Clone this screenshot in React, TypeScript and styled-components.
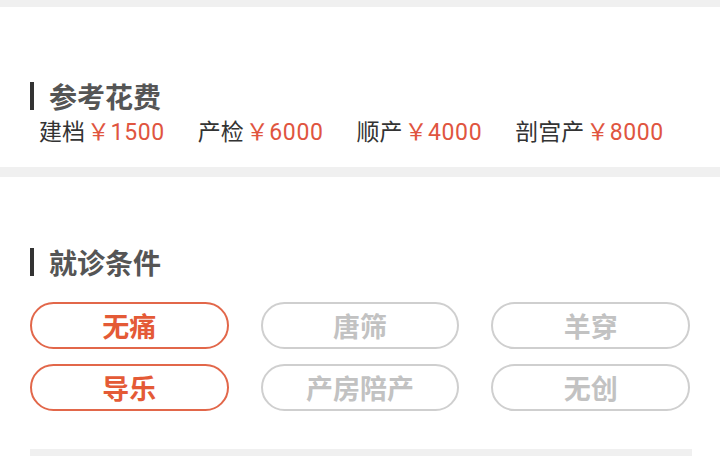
import React from "react";
import styled, { createGlobalStyle } from "styled-components";

const Global = createGlobalStyle`
  html, body { margin: 0; padding: 0; background: #ffffff; }
  body { font-family: Roboto, "Noto Sans CJK SC", sans-serif; }
`;

const Page = styled.div`
  width: 720px;
  height: 456px;
  overflow: hidden;
  background: #f0f0f0;
  padding-top: 7px;
  box-sizing: border-box;
  display: flex;
  flex-direction: column;
  gap: 10px;
`;

const Section = styled.section<{ $pt: number; $pb: number }>`
  background: #ffffff;
  padding: ${(p) => p.$pt}px 0 ${(p) => p.$pb}px;
  display: flex;
  flex-direction: column;
  flex-shrink: 0;
`;

const Title = styled.h2`
  margin: 0;
  padding-left: 30px;
  display: flex;
  align-items: center;
  gap: 15px;
  height: 32px;
  font-size: 28px;
  font-weight: 700;
  color: #555555;
  font-family: "Noto Sans CJK SC", sans-serif;
  &::before {
    content: "";
    width: 4px;
    height: 28px;
    background: #333333;
  }
`;

const CostRow = styled.div`
  display: flex;
  gap: 33px;
  padding-left: 39px;
  margin-top: 3px;
  height: 30px;
  align-items: center;
  font-size: 23px;
  font-family: Roboto, "Noto Sans CJK SC", sans-serif;
`;

const CostItem = styled.span`
  color: #333333;
  white-space: nowrap;
`;

const Price = styled.span`
  color: #e0553f;
  margin-left: 2px;
  letter-spacing: 0.6px;
`;

const Grid = styled.div`
  display: grid;
  grid-template-columns: repeat(3, 1fr);
  column-gap: 32px;
  row-gap: 15px;
  padding: 0 30px;
  margin-top: 24px;
`;

const Tag = styled.div<{ $active: boolean }>`
  height: 47px;
  box-sizing: border-box;
  border-radius: 24px;
  border: 2px solid ${(p) => (p.$active ? "#e2674a" : "#cfcfcf")};
  color: ${(p) => (p.$active ? "#e45a36" : "#c2c2c2")};
  display: flex;
  align-items: center;
  justify-content: center;
  font-size: 27px;
  font-weight: 700;
  font-family: "Noto Sans CJK SC", sans-serif;
`;

const BottomBar = styled.div`
  margin: 38px 28px 0 30px;
  height: 10px;
  background: #f0f0f0;
`;

const costs = [
  ["建档", "1500"],
  ["产检", "6000"],
  ["顺产", "4000"],
  ["剖宫产", "8000"],
];

const tags: [string, boolean][] = [
  ["无痛", true],
  ["唐筛", false],
  ["羊穿", false],
  ["导乐", true],
  ["产房陪产", false],
  ["无创", false],
];

export default function App() {
  return (
    <>
      <Global />
      <Page>
        <Section $pt={73} $pb={22}>
          <Title>参考花费</Title>
          <CostRow>
            {costs.map(([k, v]) => (
              <CostItem key={k}>
                {k}
                <Price>￥{v}</Price>
              </CostItem>
            ))}
          </CostRow>
        </Section>
        <Section $pt={69} $pb={0}>
          <Title>就诊条件</Title>
          <Grid>
            {tags.map(([t, a]) => (
              <Tag key={t} $active={a}>
                {t}
              </Tag>
            ))}
          </Grid>
          <BottomBar />
        </Section>
      </Page>
    </>
  );
}
